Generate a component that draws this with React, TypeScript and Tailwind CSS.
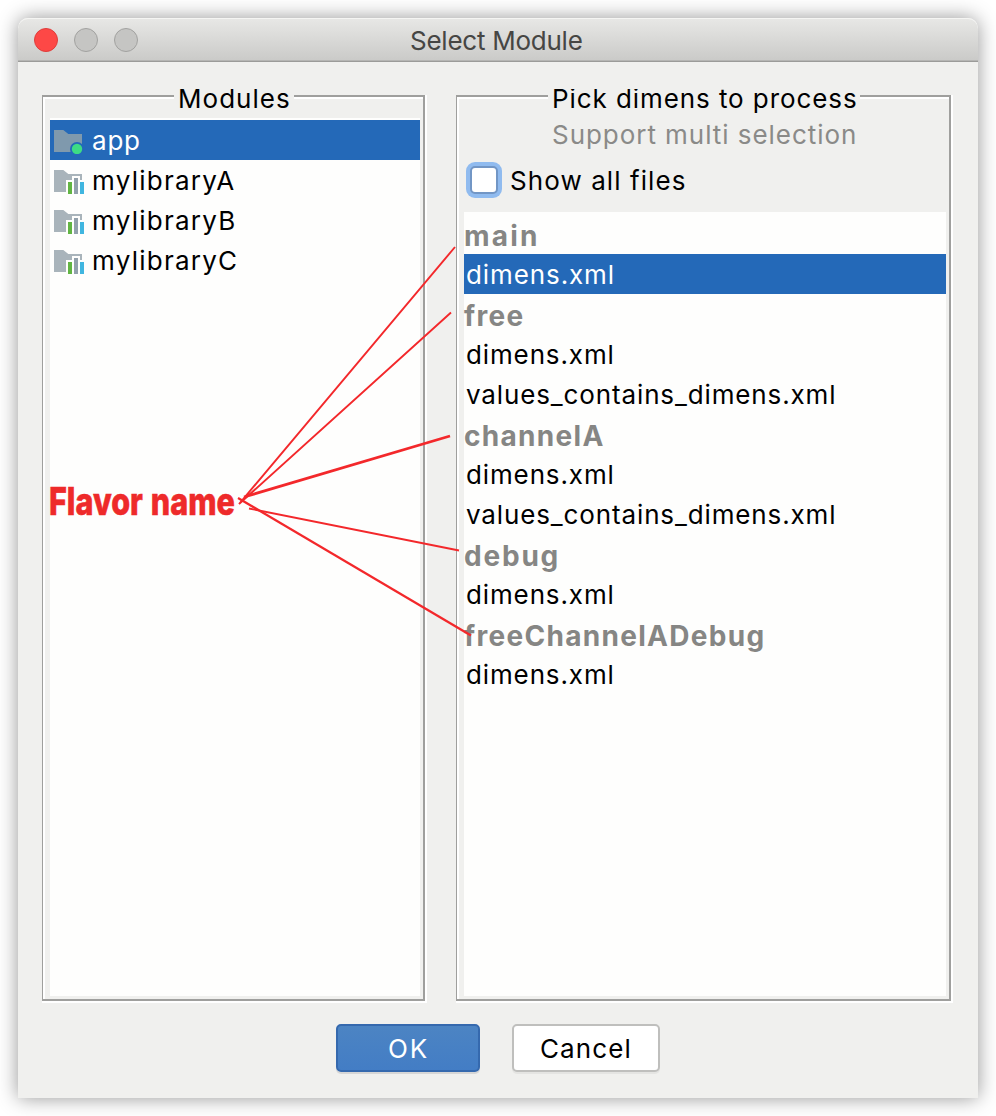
import React from "react";

const BASE = "font-['Inter',sans-serif] text-[26px]";

const panel =
  "relative flex h-[906px] flex-col border-[#9f9f9d] border-l border-t-2 border-r-2 border-b-2 " +
  "shadow-[inset_2px_2px_0_#fff,2px_2px_0_#fff,2px_0_0_#fff,0_2px_0_#fff]";

function AppIcon() {
  return (
    <svg width="32" height="24" viewBox="0 0 32 24" className="mt-1 shrink-0">
      <path d="M0 0h9.3l5 4H28v18H0z" fill="#7f99ad" />
      <circle cx="23" cy="19" r="7" fill="#2469b8" />
      <circle cx="23" cy="19" r="5.2" fill="#3ddc84" />
    </svg>
  );
}

function LibraryIcon() {
  return (
    <svg width="32" height="24" viewBox="0 0 32 24" className="mt-1 shrink-0">
      <path d="M0 0h9.3l5 4H28v6h-2V6h-8v4h-6v12H0z" fill="#a9b4bb" />
      <path d="M14 12h4v12h-4z" fill="#62b543" />
      <path d="M20 8h4v16h-4z" fill="#93a1ac" />
      <path d="M26 12h4v12h-4z" fill="#40b6e0" />
    </svg>
  );
}

const modules = [
  { name: "mylibraryA" },
  { name: "mylibraryB" },
  { name: "mylibraryC" },
];

const files: { text: string; header?: boolean }[] = [
  { text: "free", header: true },
  { text: "dimens.xml" },
  { text: "values_contains_dimens.xml" },
  { text: "channelA", header: true },
  { text: "dimens.xml" },
  { text: "values_contains_dimens.xml" },
  { text: "debug", header: true },
  { text: "dimens.xml" },
  { text: "freeChannelADebug", header: true },
  { text: "dimens.xml" },
];

function Header({ text, spacing }: { text: string; spacing?: string }) {
  return (
    <div className={`h-10 pt-px text-[28px] font-bold leading-[42px] text-[#868684] ${spacing ?? "tracking-[1.3px]"}`}>
      {text}
    </div>
  );
}

export default function App() {
  return (
    <div className={`relative h-[1116px] w-[996px] overflow-hidden bg-white px-[18px] pt-[18px] text-black ${BASE}`}>
      <div className="flex h-[1080px] w-[960px] flex-col rounded-t-[10px] bg-[#f0f0ee] shadow-[0_0_20px_rgba(0,0,0,0.42)]">
        <div className="flex h-11 shrink-0 items-center rounded-t-[10px] border-b border-[#9b9b99] bg-linear-to-b from-[#e8e8e6] to-[#cacac8] shadow-[inset_0_1px_0_#f5f5f3,inset_0_-1px_0_#b5b5b3]">
          <div className="flex w-[392px] gap-4 pl-4">
            <span className="size-6 rounded-full border border-[#df3d3b] bg-[#fd4846]" />
            <span className="size-6 rounded-full border border-[#a2a2a0] bg-[#c5c5c3]" />
            <span className="size-6 rounded-full border border-[#a2a2a0] bg-[#c5c5c3]" />
          </div>
          <div className="pt-[2px] leading-[42px] tracking-[-0.25px] whitespace-nowrap text-[#464644]">Select Module</div>
        </div>

        <div className="flex pt-[33px] pl-6">
          <div className={`w-[383px] pr-[3px] pl-[7px] ${panel}`}>
            <div className="-mt-[18px] ml-[124px] h-[41px] w-[120px] bg-[#f0f0ee] pl-1 leading-[40px] tracking-[1.03px] [clip-path:inset(10px_0)]">
              Modules
            </div>
            <div className="-mt-[2px] h-[878px] bg-[#fefefd] pt-[2px]">
              <div className="flex h-10 items-center bg-[#2469b8] pl-1 text-white">
                <AppIcon />
                <span className="ml-[6px] pt-[2px] leading-[40px] tracking-[0.8px]">app</span>
              </div>
              {modules.map((m) => (
                <div key={m.name} className="flex h-10 items-center pl-1">
                  <LibraryIcon />
                  <span className="ml-[6px] pt-[2px] leading-[40px] tracking-[1.25px]">{m.name}</span>
                </div>
              ))}
            </div>
          </div>

          <div className={`ml-[31px] w-[495px] pr-[3px] pl-[7px] ${panel}`}>
            <div className="-mt-[18px] ml-[84px] h-[37px] w-[312px] bg-[#f0f0ee] pl-1 leading-[40px] tracking-[0.92px] whitespace-nowrap [clip-path:inset(10px_0_0_0)]">
              Pick dimens to process
            </div>
            <div className="ml-[84px] h-[37px] pl-1 leading-[38px] tracking-[0.95px] whitespace-nowrap text-[#8a8a88]">
              Support multi selection
            </div>
            <div className="flex h-[59px] pt-[9px] pl-[2px]">
              <span className="flex size-9 items-center justify-center rounded-[9px] bg-[#90bbef]">
                <span className="size-7 rounded-[5px] border-2 border-[#7296c5] bg-white" />
              </span>
              <span className="ml-2 leading-[38px] tracking-[1.08px]">Show all files</span>
            </div>
            <div className="h-[784px] bg-[#fefefd] pt-[2px]">
              <Header text="main" spacing="tracking-[2.2px]" />
              <div className="h-10 bg-[#2469b8] pt-px pl-[2px] leading-[40px] tracking-[0.9px] text-white">dimens.xml</div>
              {files.map((f, i) =>
                f.header ? (
                  <Header key={i} text={f.text} spacing={f.text === "debug" ? "tracking-[1.8px]" : undefined} />
                ) : (
                  <div key={i} className="h-10 pt-px pl-[2px] leading-[40px] tracking-[0.87px]">
                    {f.text}
                  </div>
                ),
              )}
            </div>
          </div>
        </div>

        <div className="flex gap-8 pt-[23px] pl-[318px]">
          <button className="h-12 w-36 rounded-[5px] border-2 border-[#3569ae] bg-linear-to-b from-[#4c84c3] to-[#437dc5] pt-px pl-px leading-[44px] tracking-[1.8px] text-white shadow-[0_2px_0_#d6d6d6]">
            OK
          </button>
          <button className="h-12 w-37 rounded-[5px] border-2 border-[#bfbfbd] bg-white pt-px leading-[44px] tracking-[1.15px] shadow-[0_2px_0_#e4e4e2]">
            Cancel
          </button>
        </div>
      </div>

      <svg className="absolute top-0 left-0" width="996" height="1116" viewBox="0 0 996 1116" fill="none" stroke="#f3282b" strokeWidth="1.9">
        <path d="M239 504L455 247M239 504L451 312.500M249 508.500L459 550.500" />
        <path d="M238 498L471 635.500" strokeWidth="2.3" />
        <path d="M244 497L450 436" strokeWidth="2.8" />
      </svg>
      <div className="absolute top-[478px] left-[48.5px] origin-left scale-x-[0.793] font-['Inter',sans-serif] text-[38.5px] leading-[46px] font-extrabold whitespace-nowrap text-[#ee2a2a] [word-spacing:1.5px] [-webkit-text-stroke:0.6px_#ee2a2a]">
        Flavor name
      </div>
    </div>
  );
}
